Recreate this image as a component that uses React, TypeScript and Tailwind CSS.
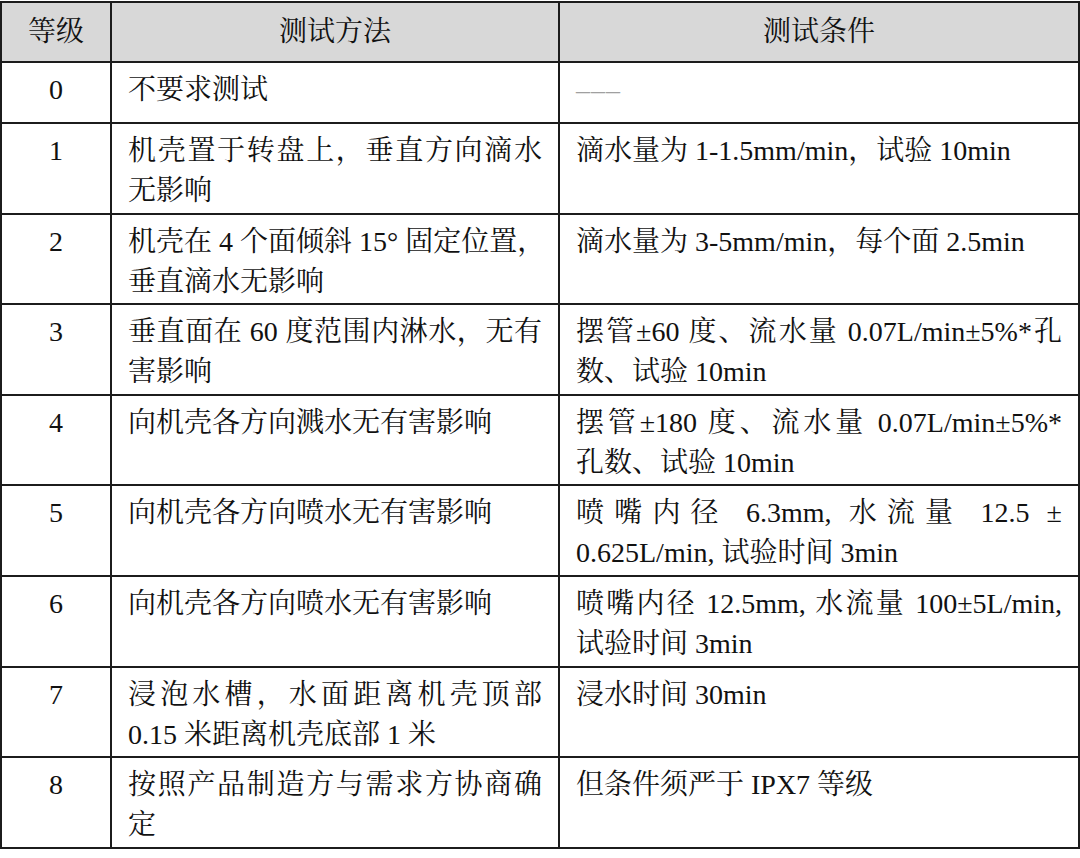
import React from "react";

type Row = {
  level: string;
  method: string[];
  condition: string[];
};

// each entry is one printed line; every line but the last is stretched to full width
const rows: Row[] = [
  { level: "0", method: ["不要求测试"], condition: ["---"] },
  {
    level: "1",
    method: ["机壳置于转盘上，垂直方向滴水", "无影响"],
    condition: ["滴水量为 1-1.5mm/min，试验 10min"],
  },
  {
    level: "2",
    method: ["机壳在 4 个面倾斜 15° 固定位置，", "垂直滴水无影响"],
    condition: ["滴水量为 3-5mm/min，每个面 2.5min"],
  },
  {
    level: "3",
    method: ["垂直面在 60 度范围内淋水，无有", "害影响"],
    condition: ["摆管±60 度、流水量 0.07L/min±5%*孔", "数、试验 10min"],
  },
  {
    level: "4",
    method: ["向机壳各方向溅水无有害影响"],
    condition: ["摆管±180 度、流水量 0.07L/min±5%*", "孔数、试验 10min"],
  },
  {
    level: "5",
    method: ["向机壳各方向喷水无有害影响"],
    condition: ["喷嘴内径 6.3mm, 水流量 12.5 ±", "0.625L/min, 试验时间 3min"],
  },
  {
    level: "6",
    method: ["向机壳各方向喷水无有害影响"],
    condition: ["喷嘴内径 12.5mm, 水流量 100±5L/min,", "试验时间 3min"],
  },
  {
    level: "7",
    method: ["浸泡水槽，水面距离机壳顶部", "0.15 米距离机壳底部 1 米"],
    condition: ["浸水时间 30min"],
  },
  {
    level: "8",
    method: ["按照产品制造方与需求方协商确", "定"],
    condition: ["但条件须严于 IPX7 等级"],
  },
];

function Lines({ lines }: { lines: string[] }) {
  return (
    <>
      {lines.map((line, i) =>
        line === "---" ? (
          <div key={i} className="text-[#a0a0a0] tracking-[1px]">
            –––
          </div>
        ) : (
          <div
            key={i}
            className={
              i < lines.length - 1
                ? "whitespace-nowrap text-justify [text-align-last:justify]"
                : "whitespace-nowrap"
            }
          >
            {line}
          </div>
        )
      )}
    </>
  );
}

export default function App() {
  const cell = "border-2 border-[#1c1c1c] align-top pt-[7px] px-[16px]";
  return (
    <div className="w-[1080px] h-[858px] bg-white overflow-hidden">
      <table
        className="w-[1080px] border-collapse table-fixed text-[28px] leading-[40px] text-[#111111] font-['Liberation_Serif','Noto_Serif_CJK_SC','Noto_Sans_CJK_SC',serif] mt-[1px]"
      >
        <colgroup>
          <col className="w-[110px]" />
          <col className="w-[448px]" />
          <col />
        </colgroup>
        <thead>
          <tr className="h-[60px] bg-[#d8d8d8]">
            <th className="border-2 border-[#1c1c1c] align-middle font-normal text-center">等级</th>
            <th className="border-2 border-[#1c1c1c] align-middle font-normal text-center">测试方法</th>
            <th className="border-2 border-[#1c1c1c] align-middle font-normal text-center">测试条件</th>
          </tr>
        </thead>
        <tbody>
          {rows.map((r) => (
            <tr key={r.level} className={r.level === "0" ? "h-[61px]" : "h-[90.6px]"}>
              <td className={`${cell} text-center`}>{r.level}</td>
              <td className={cell}>
                <Lines lines={r.method} />
              </td>
              <td className={cell}>
                <Lines lines={r.condition} />
              </td>
            </tr>
          ))}
        </tbody>
      </table>
    </div>
  );
}
